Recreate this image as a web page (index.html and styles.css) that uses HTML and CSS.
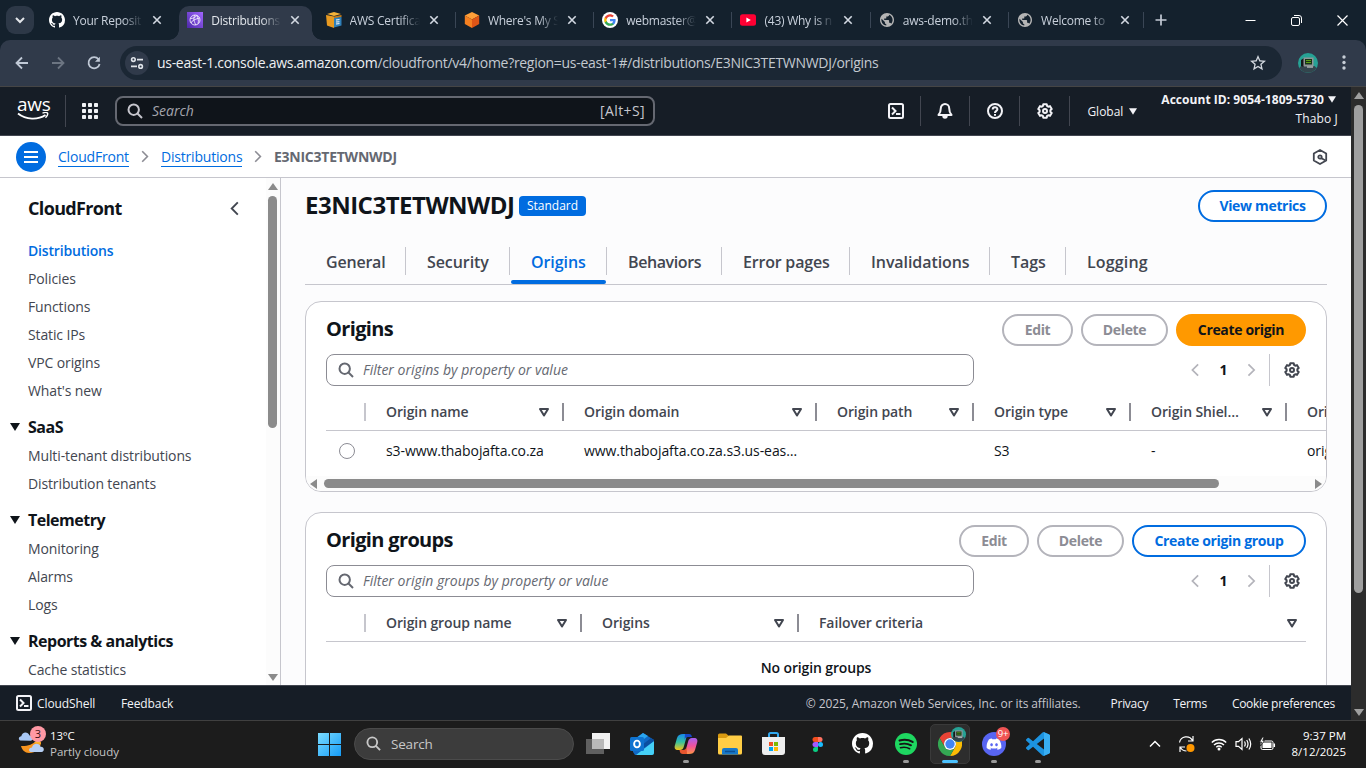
FILE: index.html
```html
<!DOCTYPE html>
<html lang="en">
<head>
<meta charset="utf-8">
<title>Distributions</title>
<link rel="stylesheet" href="styles.css">
</head>
<body>
<svg class="defs" width="0" height="0">
  <symbol id="x" viewBox="0 0 10 10"><path d="M1.3 1.3l7.4 7.4M8.7 1.3L1.3 8.7" stroke="currentColor" stroke-width="1.6" fill="none"/></symbol>
  <symbol id="github" viewBox="0 0 16 16"><path fill="#fff" d="M8 0C3.58 0 0 3.58 0 8c0 3.54 2.29 6.53 5.47 7.59.4.07.55-.17.55-.38 0-.19-.01-.82-.01-1.49-2.01.37-2.53-.49-2.69-.94-.09-.23-.48-.94-.82-1.13-.28-.15-.68-.52-.01-.53.63-.01 1.08.58 1.23.82.72 1.21 1.87.87 2.33.66.07-.52.28-.87.51-1.07-1.78-.2-3.64-.89-3.64-3.95 0-.87.31-1.59.82-2.15-.08-.2-.36-1.02.08-2.12 0 0 .67-.21 2.2.82.64-.18 1.32-.27 2-.27.68 0 1.36.09 2 .27 1.53-1.04 2.2-.82 2.2-.82.44 1.1.16 1.92.08 2.12.51.56.82 1.27.82 2.15 0 3.07-1.87 3.75-3.65 3.95.29.25.54.73.54 1.48 0 1.07-.01 1.93-.01 2.2 0 .21.15.46.55.38A8.013 8.013 0 0016 8c0-4.42-3.58-8-8-8z"/></symbol>
  <symbol id="globe" viewBox="2 2 20 20"><path fill="#b4b4b4" d="M12 2C6.48 2 2 6.48 2 12s4.48 10 10 10 10-4.48 10-10S17.52 2 12 2zm-1 17.93c-3.95-.49-7-3.85-7-7.93 0-.62.08-1.21.21-1.79L9 15v1c0 1.1.9 2 2 2v1.930zm6.9-2.54c-.26-.81-1-1.390-1.900-1.390h-1v-3c0-.55-.45-1-1-1H8v-2h2c.55 0 1-.45 1-1V7h2c1.100 0 2-.9 2-2v-.41c2.930 1.190 5 4.060 5 7.410 0 2.080-.8 3.970-2.100 5.390z"/></symbol>
  <symbol id="search" viewBox="0 0 16 16"><circle cx="6.7" cy="6.7" r="5.2" fill="none" stroke="currentColor" stroke-width="2"/><path d="M10.5 10.500l4.500 4.500" stroke="currentColor" stroke-width="2"/></symbol>
  <symbol id="gear" viewBox="0 0 16 16"><g fill="none" stroke="currentColor" stroke-width="2" stroke-linejoin="round"><path d="M5.890 3.030L6.310 1.210H9.690L10.110 3.030 11.250 3.690 13.030 3.140 14.720 6.070 13.360 7.340V8.660L14.720 9.930 13.030 12.860 11.250 12.310 10.110 12.970 9.690 14.790H6.310L5.890 12.970 4.750 12.310 2.970 12.860 1.280 9.930 2.640 8.660V7.340L1.280 6.070 2.970 3.140 4.750 3.690z"/><circle cx="8" cy="8" r="2"/></g></symbol>
  <symbol id="shell" viewBox="0 0 16 16"><g fill="none" stroke="currentColor" stroke-width="2"><rect x="1" y="1" width="14" height="14" rx="1.500"/><path d="M4 4.500L7.500 8 4 11.500M8 11h4.500"/></g></symbol>
  <symbol id="next" viewBox="0 0 10 16"><path d="M1.500 1.500L8 8l-6.500 6.500" fill="none" stroke="currentColor" stroke-width="2"/></symbol>
  <symbol id="prev" viewBox="0 0 10 16"><path d="M8 1.500L1.500 8 8 14.500" fill="none" stroke="currentColor" stroke-width="2"/></symbol>
  <symbol id="down" viewBox="0 0 10 8"><path d="M0 0h10L5 8z" fill="currentColor"/></symbol>
  <symbol id="sort" viewBox="0 0 10 9"><path d="M1 1h8L5 7.500z" fill="none" stroke="currentColor" stroke-width="2" stroke-linejoin="round"/></symbol>
  <symbol id="avatar" viewBox="0 0 20 20"><circle cx="10" cy="10" r="10" fill="#26a295"/><path d="M1.500 15a10 10 0 0017 0l-2-2H3z" fill="#34454d"/><path d="M3 7l3-2v9l-3-1z" fill="#15191b"/><rect x="5.500" y="4.500" width="10" height="9" fill="#8f9698"/><rect x="7" y="6" width="7" height="5.500" fill="#173318"/><path d="M8 7.500h5M8 9.500h5" stroke="#5c9e18"/><path d="M9 14h6" stroke="#aab0b0" stroke-width="1.500"/></symbol>
</svg>

<header class="tabstrip">
  <button class="tab-search"><svg width="10" height="7" viewBox="0 0 10 7"><path d="M1 1l4 4 4-4" fill="none" stroke="#e3e6ea" stroke-width="2"/></svg></button>
  <div class="tabs">
    <div class="tab"><svg class="fav"><use href="#github"/></svg><span class="ttl">Your Reposit</span><svg class="close"><use href="#x"/></svg></div>
    <div class="tab active"><svg class="fav" viewBox="0 0 16 16"><defs><linearGradient id="pu" x1="0" y1="1" x2="1" y2="0"><stop stop-color="#4c28a8"/><stop offset="1" stop-color="#a166ff"/></linearGradient></defs><rect width="16" height="16" fill="url(#pu)"/><g fill="none" stroke="#fff" stroke-width=".8"><circle cx="8" cy="8" r="5"/><path d="M3.500 6.500c3 0 5-1 6-3M4 11c1-3 5-4 8.500-5M8 3c-2 3-1 7 1 10M10 3.500c1 3 2 5 1 8"/></g></svg><span class="ttl">Distributions</span><svg class="close"><use href="#x"/></svg></div>
    <div class="tab"><svg class="fav" viewBox="0 0 16 16"><path fill="#f5b338" d="M1 2l7-2 7 2-7 2z"/><path fill="#e89b21" d="M0 3l8 1.500V16l-7-2.500z"/><path fill="#c87b15" d="M8 4.500L15.500 3v2L8 7z"/><path fill="#2e80ba" d="M8 6l7.500-1v8.500L8 15.500z"/><path d="M10 8l3.500-.4M10 10l3.500-.2M10 12l3.500-.4" stroke="#fff"/></svg><span class="ttl">AWS Certifica</span><svg class="close"><use href="#x"/></svg></div>
    <div class="tab sep"><svg class="fav" viewBox="0 0 16 16"><path fill="#ff9f38" d="M8 0l7.200 3.500L8 7.500.8 3.500z"/><path fill="#f58020" d="M.8 3.500L8 7.500V16L.8 12z"/><path fill="#df5516" d="M8 7.500l7.200-4V12L8 16z"/></svg><span class="ttl">Where's My S</span><svg class="close"><use href="#x"/></svg></div>
    <div class="tab sep"><svg class="fav" viewBox="0 0 16 16"><circle cx="8" cy="8" r="8" fill="#fff"/><g transform="translate(1.600 1.600) scale(.533)"><path fill="#4285f4" d="M22.560 12.250c0-.78-.07-1.530-.2-2.250H12v4.260h5.920c-.26 1.370-1.040 2.530-2.210 3.310v2.770h3.570c2.080-1.920 3.280-4.740 3.280-8.090z"/><path fill="#34a853" d="M12 23c2.970 0 5.460-.98 7.280-2.660l-3.570-2.770c-.98.66-2.230 1.060-3.710 1.060-2.860 0-5.290-1.930-6.160-4.530H2.180v2.840C3.990 20.530 7.700 23 12 23z"/><path fill="#fbbc05" d="M5.840 14.090c-.22-.66-.35-1.360-.35-2.090s.13-1.430.35-2.090V7.070H2.180C1.430 8.550 1 10.220 1 12s.43 3.450 1.180 4.930l2.850-2.220z"/><path fill="#ea4335" d="M12 5.380c1.620 0 3.060.56 4.210 1.640l3.150-3.150C17.450 2.090 14.970 1 12 1 7.700 1 3.990 3.470 2.180 7.070l3.660 2.840c.87-2.600 3.300-4.530 6.160-4.530z"/></g></svg><span class="ttl">webmaster@</span><svg class="close"><use href="#x"/></svg></div>
    <div class="tab sep"><svg class="fav" viewBox="0 0 16 16"><rect y="2.300" width="16" height="11.400" rx="2.500" fill="#f03"/><path d="M6.400 5.500v5L10.800 8z" fill="#fff"/></svg><span class="ttl">(43) Why is n</span><svg class="close"><use href="#x"/></svg></div>
    <div class="tab sep"><svg class="fav globe"><use href="#globe"/></svg><span class="ttl">aws-demo.th</span><svg class="close"><use href="#x"/></svg></div>
    <div class="tab sep"><svg class="fav globe"><use href="#globe"/></svg><span class="ttl">Welcome to</span><svg class="close"><use href="#x"/></svg></div>
  </div>
  <svg class="plus" width="12" height="12" viewBox="0 0 12 12"><path d="M6 .5v11M.5 6h11" stroke="#c3cad5" stroke-width="1.700"/></svg>
  <div class="window-controls">
    <svg width="11" height="11" viewBox="0 0 11 11"><path d="M.5 5.500h10" stroke="#fff"/></svg>
    <svg width="11" height="11" viewBox="0 0 11 11"><g fill="none" stroke="#fff"><rect x=".5" y="2.500" width="8" height="8" rx="1.500"/><path d="M3 .5h5a2.500 2.500 0 012.500 2.500v5"/></g></svg>
    <svg width="11" height="11" viewBox="0 0 11 11"><path d="M.5.5l10 10M10.500.5l-10 10" stroke="#fff" stroke-width="1.200"/></svg>
  </div>
</header>

<div class="toolbar-wrap"><div class="toolbar">
  <svg class="nav-ic" viewBox="0 0 16 16"><path d="M14 8H3M8 2.500L2.500 8 8 13.500" stroke="#c0c9d6" stroke-width="1.800" fill="none"/></svg>
  <svg class="nav-ic" viewBox="0 0 16 16"><path d="M2 8h11M8 2.500L13.500 8 8 13.500" stroke="#6c7582" stroke-width="1.800" fill="none"/></svg>
  <svg class="nav-ic" viewBox="0 0 16 16"><path d="M12.500 4.200A5.600 5.600 0 1013.600 9" stroke="#c0c9d6" stroke-width="1.800" fill="none"/><path d="M13.900 1.800v5H9z" fill="#c0c9d6"/></svg>
  <div class="omnibox">
    <span class="site"><svg width="14" height="14" viewBox="0 0 14 14"><g stroke="#dfe3e8" stroke-width="1.600" fill="none"><circle cx="3.400" cy="3.600" r="1.800"/><path d="M7 3.600h6M1 10.400h6"/><circle cx="10.600" cy="10.400" r="1.800"/></g></svg></span>
    <span class="url"><b>us-east-1.console.aws.amazon.com</b>/cloudfront/v4/home?region=us-east-1#/distributions/E3NIC3TETWNWDJ/origins</span>
    <svg class="star" width="16" height="16" viewBox="2 2 20 20"><path fill="#d4d9e0" d="M22 9.240l-7.190-.62L12 2 9.190 8.630 2 9.240l5.460 4.730L5.820 21 12 17.270 18.180 21l-1.630-7.030L22 9.240zM12 15.400l-3.760 2.270 1-4.280-3.320-2.880 4.380-.38L12 6.100l1.710 4.040 4.380.38-3.320 2.880 1 4.280L12 15.400z"/></svg>
  </div>
  <svg class="avatar" width="20" height="20"><use href="#avatar"/></svg>
  <svg width="4" height="16" viewBox="0 0 4 16"><g fill="#c6cdd6"><circle cx="2" cy="2" r="1.700"/><circle cx="2" cy="7.500" r="1.700"/><circle cx="2" cy="13" r="1.700"/></g></svg>
</div></div>

<div class="viewport">
 <div class="page">
  <header class="aws-head">
    <div class="aws-logo"><span>aws</span><svg width="32" height="9" viewBox="0 0 32 9"><path d="M1 1.500c8 6.500 20 6.500 27.500 1.500" fill="none" stroke="#fff" stroke-width="1.800"/><path d="M25.500 1.200c2-.8 4.500-.8 5 0s-.5 3-2 4.500" fill="none" stroke="#fff" stroke-width="1.400"/></svg></div>
    <i class="vline"></i>
    <svg class="grid9" width="16" height="16" viewBox="0 0 16 16"><g fill="#f0f2f5"><rect width="4" height="4" rx=".8"/><rect x="6" width="4" height="4" rx=".8"/><rect x="12" width="4" height="4" rx=".8"/><rect y="6" width="4" height="4" rx=".8"/><rect x="6" y="6" width="4" height="4" rx=".8"/><rect x="12" y="6" width="4" height="4" rx=".8"/><rect y="12" width="4" height="4" rx=".8"/><rect x="6" y="12" width="4" height="4" rx=".8"/><rect x="12" y="12" width="4" height="4" rx=".8"/></g></svg>
    <div class="aws-search"><svg width="16" height="16"><use href="#search"/></svg><em>Search</em><span>[Alt+S]</span></div>
    <div class="aws-tools">
      <span class="tool"><svg width="16" height="16"><use href="#shell"/></svg></span>
      <span class="tool"><svg width="16" height="16" viewBox="0 0 16 16"><path d="M8 1a4.200 4.200 0 00-4.200 4.200c0 3.300-1 5.300-2.300 6.800h13c-1.300-1.500-2.300-3.500-2.300-6.800A4.200 4.200 0 008 1z" fill="none" stroke="currentColor" stroke-width="2" stroke-linejoin="round"/><path d="M5.300 13h5.400a2.700 2.700 0 01-5.400 0z" fill="currentColor"/></svg></span>
      <span class="tool"><svg width="16" height="16" viewBox="0 0 16 16"><g fill="none" stroke="currentColor" stroke-width="2"><circle cx="8" cy="8" r="7"/><path d="M5.700 6.500c0-3 4.700-3 4.700-.2C10.400 8 8 7.800 8 10M8 11v1.800"/></g></svg></span>
      <span class="tool"><svg width="16" height="16"><use href="#gear"/></svg></span>
    </div>
    <div class="region">Global<svg width="8" height="7"><use href="#down"/></svg></div>
    <div class="account"><b>Account ID: 9054-1809-5730</b><svg width="8" height="7"><use href="#down"/></svg><span>Thabo J</span></div>
  </header>

  <nav class="crumbs">
    <span class="menu"><svg width="14" height="12" viewBox="0 0 14 12"><path d="M0 1h14M0 6h14M0 11h14" stroke="#fff" stroke-width="2"/></svg></span>
    <a class="c1">CloudFront</a><svg class="chev"><use href="#next"/></svg>
    <a class="c2">Distributions</a><svg class="chev"><use href="#next"/></svg>
    <b>E3NIC3TETWNWDJ</b>
    <svg class="hexclock" width="16" height="16" viewBox="0 0 16 16"><g fill="none" stroke="#424650" stroke-width="1.800"><path d="M8 1l6.200 3.500v7L8 15l-6.200-3.500v-7z" stroke-linejoin="round"/><circle cx="8" cy="8" r="1.700"/><path d="M9 9l4.500 2.500"/></g></svg>
  </nav>

  <div class="body">
    <aside class="side">
      <div class="side-in">
        <h2>CloudFront<svg width="10" height="15"><use href="#prev"/></svg></h2>
        <ul class="first"><li class="on">Distributions</li><li>Policies</li><li>Functions</li><li>Static IPs</li><li>VPC origins</li><li>What's new</li></ul>
        <h3><svg><use href="#down"/></svg>SaaS</h3>
        <ul><li>Multi-tenant distributions</li><li>Distribution tenants</li></ul>
        <h3><svg><use href="#down"/></svg>Telemetry</h3>
        <ul><li>Monitoring</li><li>Alarms</li><li>Logs</li></ul>
        <h3><svg><use href="#down"/></svg>Reports &amp; analytics</h3>
        <ul><li>Cache statistics</li></ul>
      </div>
      <div class="vbar"><i class="up"></i><i class="thumb"></i><i class="dn"></i></div>
    </aside>

    <main>
      <div class="title"><h1>E3NIC3TETWNWDJ</h1><span class="badge">Standard</span><button class="btn blue vm">View metrics</button></div>
      <div class="navtabs"><span class="t1">General</span><span class="t2">Security</span><span class="t3 sel">Origins</span><span class="t4">Behaviors</span><span class="t5">Error pages</span><span class="t6">Invalidations</span><span class="t7">Tags</span><span class="t8">Logging</span></div>

      <section class="card one">
        <div class="card-head"><h2>Origins</h2><button class="btn edit">Edit</button><button class="btn del">Delete</button><button class="btn orange">Create origin</button></div>
        <div class="filter-row"><div class="filter"><svg width="16" height="16"><use href="#search"/></svg><em>Filter origins by property or value</em></div><div class="pager"><svg><use href="#prev"/></svg><b>1</b><svg><use href="#next"/></svg><i></i><svg class="cog"><use href="#gear"/></svg></div></div>
        <div class="table a">
          <div class="thead"><span></span><span>Origin name<svg><use href="#sort"/></svg></span><span>Origin domain<svg><use href="#sort"/></svg></span><span>Origin path<svg><use href="#sort"/></svg></span><span>Origin type<svg><use href="#sort"/></svg></span><span>Origin Shiel…<svg><use href="#sort"/></svg></span><span>Ori</span></div>
          <div class="trow"><span><i class="radio"></i></span><span>s3-www.thabojafta.co.za</span><span>www.thabojafta.co.za.s3.us-eas…</span><span></span><span>S3</span><span>-</span><span>orig</span></div>
        </div>
        <div class="hbar"><i class="lf"></i><i class="thumb"></i><i class="rt"></i></div>
      </section>

      <section class="card two">
        <div class="card-head"><h2>Origin groups</h2><button class="btn edit">Edit</button><button class="btn del">Delete</button><button class="btn blue cog2">Create origin group</button></div>
        <div class="filter-row"><div class="filter"><svg width="16" height="16"><use href="#search"/></svg><em>Filter origin groups by property or value</em></div><div class="pager"><svg><use href="#prev"/></svg><b>1</b><svg><use href="#next"/></svg><i></i><svg class="cog"><use href="#gear"/></svg></div></div>
        <div class="table b">
          <div class="thead"><span></span><span>Origin group name<svg><use href="#sort"/></svg></span><span>Origins<svg><use href="#sort"/></svg></span><span>Failover criteria<svg><use href="#sort"/></svg></span></div>
        </div>
        <p class="empty">No origin groups</p>
      </section>
    </main>
  </div>

  <footer class="foot"><svg width="16" height="16"><use href="#shell"/></svg><b class="f1">CloudShell</b><b class="f2">Feedback</b><span class="copy">© 2025, Amazon Web Services, Inc. or its affiliates.</span><b class="f3">Privacy</b><b class="f4">Terms</b><b class="f5">Cookie preferences</b></footer>
 </div>
 <div class="vbar dark"><i class="up"></i><i class="thumb"></i><i class="dn"></i></div>
</div>

<div class="taskbar">
  <div class="weather">
    <svg width="28" height="30" viewBox="0 0 28 30"><path d="M3 20c5 .5 12-1 16-6l4 2c0 6-5 11-12 11-4 0-7-3-8-7z" fill="#f7941e"/><path d="M16 17l5-4 2 5z" fill="#fbb62f"/><path d="M2.500 14.500c-2.500-.5-2-4 .8-4.200C4 5.500 10 5 11.500 9.500c4-.5 4.500 5 1 5.200z" fill="#a9c8f5"/><path d="M13 26c-3-.5-2.500-4.500 1-4.500.5-5 8-5 8.500-.8 4-.4 4.500 5 1 5.300z" fill="#b7cff3"/><circle cx="20" cy="8" r="8" fill="#ff99a4"/><text x="20" y="12" class="wnum">3</text></svg>
    <div><span>13°C</span><small>Partly cloudy</small></div>
  </div>
  <div class="cell start"><svg width="24" height="24" viewBox="0 0 24 24"><defs><linearGradient id="win" x1="0" y1="0" x2="1" y2="1" gradientUnits="objectBoundingBox"><stop stop-color="#7bdcff"/><stop offset="1" stop-color="#159cf7"/></linearGradient></defs><path fill="url(#win)" d="M1 1h11v11H1zM13 1h11v11H13zM1 13h11v11H1zM13 13h11v11H13z"/></svg></div>
  <div class="tsearch"><svg width="15" height="15"><use href="#search"/></svg>Search</div>
  <div class="apps">
    <div class="cell"><svg width="24" height="24" viewBox="0 0 24 24"><rect x="6" y="1" width="18" height="16" fill="#f2f2f2"/><path d="M0 7h18v15H0z" fill="#5f5f5f"/><path d="M6 7h12v10H6z" fill="#b9b9b9"/></svg></div>
    <div class="cell"><svg width="24" height="24" viewBox="0 0 24 24"><path d="M3 8l10-7 11 7v13l-2 2H5l-2-3z" fill="#1068c4"/><path d="M13 1l5 3-8 6-5-3z" fill="#2aa5ef"/><path d="M24 9v12a2 2 0 01-2 2H6z" fill="#45d0f7"/><path d="M14 16l10-7v-1l-3-2-9 7z" fill="#0a4fa0"/><rect y="5" width="14" height="14" rx="1.500" fill="#0f73d0"/><ellipse cx="7" cy="12" rx="2.900" ry="3.400" fill="none" stroke="#fff" stroke-width="1.900"/></svg></div>
    <div class="cell run"><svg width="24" height="24" viewBox="0 0 24 24"><defs><linearGradient id="cp1" x1="0" y1="0" x2="0" y2="1"><stop stop-color="#1688ec"/><stop offset=".5" stop-color="#35c1a0"/><stop offset="1" stop-color="#f5c518"/></linearGradient><linearGradient id="cp2" x1="0" y1="0" x2="0" y2="1"><stop stop-color="#a660f0"/><stop offset=".5" stop-color="#f0529c"/><stop offset="1" stop-color="#ff9445"/></linearGradient></defs><path d="M9 2h7c-2 0-3 1-3.500 3l-2.500 9c-.8 3-2 4-4 4H4c-3 0-4-2-3-5l2-7c1-3 3-4 6-4z" fill="url(#cp1)"/><path d="M11 2h4c2 0 2.500 1 3 3h-4c-2 0-3 1-3.500 3z" fill="#1647c8"/><path d="M15 22H8c2 0 3-1 3.500-3L14 10c.8-3 2-4 4-4h2c3 0 4 2 3 5l-2 7c-1 3-3 4-6 4z" fill="url(#cp2)"/><path d="M13 22H9c-2 0-3-1-3.500-4H9c2 0 3-1 3.500-3z" fill="#e8562e"/></svg></div>
    <div class="cell"><svg width="24" height="24" viewBox="0 0 24 24"><path d="M0 3a1.500 1.500 0 011.500-1.500H8L11 4v5H0z" fill="#d99a10"/><path d="M0 6h8l3-2.500h12A1 1 0 0124 4.500V21a1.500 1.500 0 01-1.500 1.500h-21A1.500 1.500 0 010 21z" fill="#ffcd45"/><path d="M4 22.500V18a2 2 0 012-2h12a2 2 0 012 2v4.500z" fill="#1778c8"/><path d="M7 19.500h10" stroke="#0c4f92" stroke-width="1.500"/></svg></div>
    <div class="cell"><svg width="24" height="24" viewBox="0 0 24 24"><path d="M7 7V2.500A1.500 1.500 0 018.500 1h6A1.500 1.500 0 0116 2.500V7" fill="none" stroke="#31a8ef" stroke-width="2"/><path d="M0 5h23v15a3 3 0 01-3 3H3a3 3 0 01-3-3z" fill="#eee"/><path fill="#f25022" d="M7 10h4v4H7z"/><path fill="#7fba00" d="M12 10h4v4h-4z"/><path fill="#00a4ef" d="M7 15h4v4H7z"/><path fill="#ffb900" d="M12 15h4v4h-4z"/></svg></div>
    <div class="cell"><svg width="24" height="24" viewBox="0 0 24 24"><path fill="#f24e1e" d="M12 5v5H9a2.500 2.500 0 010-5z"/><path fill="#ff7262" d="M12 5h2a2.500 2.500 0 010 5h-2z"/><path fill="#a259ff" d="M12 10v5H9a2.500 2.500 0 010-5z"/><circle cx="14.500" cy="12.500" r="2.500" fill="#1abcfe"/><path fill="#0acf83" d="M12 15v2.500A2.500 2.500 0 119.500 15z"/></svg></div>
    <div class="cell"><svg width="21" height="21"><use href="#github"/></svg></div>
    <div class="cell run"><svg width="22" height="22" viewBox="0 0 24 24"><circle cx="12" cy="12" r="12" fill="#1ed760"/><g fill="none" stroke="#151515" stroke-linecap="round"><path d="M5 8.200c5-1.500 10-.9 14.200 1.500" stroke-width="2.400"/><path d="M5.500 12.200c4.400-1.200 8.500-.8 12 1.300" stroke-width="2"/><path d="M6 16c3.600-.9 7-.6 10 1.200" stroke-width="1.700"/></g></svg></div>
    <div class="cell chrome"><svg width="24" height="24" viewBox="0 0 24 24"><path fill="#ea4335" d="M12 0a12 12 0 0110.400 6H12a6 6 0 00-5.200 9L1.600 6A12 12 0 0112 0z"/><path fill="#fbbc04" d="M22.400 6A12 12 0 0112 24l5.200-9A6 6 0 0012 6z"/><path fill="#34a853" d="M1.600 6A12 12 0 0012 24l5.200-9a6 6 0 01-10.400 0z"/><circle cx="12" cy="12" r="6" fill="#fff"/><circle cx="12" cy="12" r="4.700" fill="#4285f4"/></svg><svg class="over" width="15" height="15"><use href="#avatar"/></svg></div>
    <div class="cell run"><svg width="24" height="24" viewBox="0 0 24 24"><circle cx="12" cy="12" r="12" fill="#5865f2"/><path fill="#fff" transform="translate(4.600 4.700) scale(.62)" d="M20.317 4.370a19.800 19.800 0 00-4.885-1.515.074.074 0 00-.079.037c-.21.375-.444.865-.608 1.250-1.845-.276-3.680-.276-5.487 0-.164-.393-.406-.874-.618-1.250a.077.077 0 00-.079-.037 19.736 19.736 0 00-4.885 1.515C.533 9.046-.319 13.580.099 18.058c2.083 1.560 4.072 2.475 6.024 3.085.546-.658.957-1.322 1.310-2.021-.694-.354-1.316-.655-1.914-1l.37-.420c3.929 1.795 8.180 1.795 12.140 0l.373.420c-.598.350-1.220.645-1.873.892.320.805.731 1.470 1.185 2.100 1.960-.578 3.948-1.493 6.001-3 .5-5.177-.838-9.674-3.548-13.660zM8.020 15.330c-1.182 0-2.157-1.085-2.157-2.419 0-1.333.956-2.419 2.157-2.419 1.210 0 2.176 1.096 2.157 2.420 0 1.333-.956 2.418-2.157 2.418zm7.975 0c-1.183 0-2.157-1.085-2.157-2.419 0-1.333.955-2.419 2.157-2.419 1.210 0 2.176 1.096 2.157 2.420 0 1.333-.946 2.418-2.157 2.418z"/></svg><span class="count">9+</span></div>
    <div class="cell run"><svg width="24" height="24" viewBox="0 0 24 24"><path fill="#1c93e0" d="M23.150 2.587L18.210.21a1.494 1.494 0 0 0-1.705.29l-9.460 8.630-4.120-3.128a.999.999 0 0 0-1.276.057L.327 7.261A1 1 0 0 0 .326 8.740L3.899 12 .326 15.260a1 1 0 0 0 .001 1.479L1.650 17.940a.999.999 0 0 0 1.276.057l4.120-3.128 9.460 8.630a1.492 1.492 0 0 0 1.704.29l4.942-2.377A1.500 1.500 0 0 0 24 20.060V3.939a1.500 1.500 0 0 0-.85-1.352zm-5.146 14.861L10.826 12l7.178-5.448v10.896z"/><path d="M18 .3l5.200 2.300a1.500 1.500 0 01.8 1.400v16a1.500 1.500 0 01-.8 1.400L18 23.700z" fill="#38aef3"/></svg></div>
  </div>
  <div class="tray">
    <svg width="12" height="8" viewBox="0 0 12 8"><path d="M1 6.500l5-5 5 5" fill="none" stroke="#fff" stroke-width="1.500"/></svg>
    <svg class="sync" width="18" height="18" viewBox="0 0 18 18"><g fill="none" stroke="#fff" stroke-width="1.200"><path d="M1.500 7.500a7 7 0 0113-2M15 1v5h-5M2 17v-5h5M2.500 12.500a7 7 0 006 3.500"/></g><circle cx="12.500" cy="13" r="4" fill="#ff9800"/></svg>
    <svg class="wifi" width="16" height="14" viewBox="0 0 16 14"><g fill="none" stroke="#fff" stroke-width="1.400"><path d="M.8 5.500a10.300 10.300 0 0114.400 0M3 8a7.200 7.200 0 0110 0M5.300 10.300a4 4 0 015.400 0"/></g><circle cx="8" cy="12" r="1.500" fill="#fff"/></svg>
    <svg class="vol" width="17" height="14" viewBox="0 0 17 14"><g fill="none" stroke="#fff" stroke-width="1.200"><path d="M1 4.700h2.500L7 1.500v11L3.500 9.300H1zM9.500 4.500q1.500 2.500 0 5M11.700 3q2.600 4 0 8M13.900 1.500q3.600 5.500 0 11"/></g></svg>
    <svg class="bat" width="17" height="14" viewBox="0 0 17 14"><rect x="2" y="4" width="12" height="8.500" rx="1.500" fill="none" stroke="#fff"/><rect x="3.500" y="5.500" width="9" height="5.500" fill="#fff"/><path d="M15.300 6.500v3.500" stroke="#fff" stroke-width="1.500"/><path d="M3.500 0L.5 5h2L1.500 9 5.500 3.500H3.700L5 0z" fill="#fff" stroke="#1c1c1c" stroke-width=".8"/></svg>
    <div class="clock"><span>9:37 PM</span><span>8/12/2025</span></div>
  </div>
</div>
</body>
</html>
```
FILE: styles.css
```css
* { box-sizing: border-box; margin: 0; padding: 0; }
body { width: 1366px; height: 768px; overflow: hidden; display: flex; flex-direction: column; font-family: "Open Sans", "Noto Sans", sans-serif; font-size: 14px; color: #0f141a; background: #14212d; }
svg { display: block; flex: none; }
.defs { position: absolute; }
button { font: inherit; border: 0; background: none; }
ul { list-style: none; }
em { font-style: italic; }

/* browser tab strip */
.tabstrip { height: 40px; flex: none; display: flex; align-items: center; background: #14212d; }
.tab-search { width: 28px; height: 28px; margin: 0 7px 0 6px; border-radius: 9px; background: #2d3847; display: grid; place-items: center; }
.tabs { display: flex; height: 34px; margin-top: 6px; }
.tab { width: 138.3px; display: flex; align-items: center; padding: 0 0 6px 8px; font-size: 12px; letter-spacing: -.25px; color: #c8d0db; position: relative; }
.fav { width: 16px; height: 16px; margin-right: 8px; }
.fav.globe { width: 14px; height: 14px; margin: 0 9px 0 1px; }
.ttl { width: 70px; white-space: nowrap; -webkit-mask-image: linear-gradient(90deg, #000 72%, transparent); mask-image: linear-gradient(90deg, #000 72%, transparent); }
.close { width: 10px; height: 10px; margin-left: 9px; color: #d3d9e2; }
.tab.active { background: #303a4a; border-radius: 10px 10px 0 0; width: 133px; margin-right: 5.300px; color: #e3e7ec; }
.tab.active::before, .tab.active::after { content: ""; position: absolute; bottom: 0; width: 10px; height: 10px; }
.tab.active::before { left: -10px; background: radial-gradient(circle at 0 0, transparent 9.5px, #303a4a 10px); }
.tab.active::after { right: -10px; background: radial-gradient(circle at 100% 0, transparent 9.5px, #303a4a 10px); }
.tab.sep::before { content: ""; position: absolute; left: -1px; top: 6px; width: 1px; height: 16px; background: #3a4655; }
.tab.sep:last-child::after { content: ""; position: absolute; right: 3px; top: 6px; width: 1px; height: 16px; background: #3a4655; }
.plus { margin-left: 8px; }
.window-controls { margin-left: auto; display: flex; gap: 35px; padding-right: 18px; }

/* browser toolbar */
.toolbar-wrap { flex: none; height: 47px; border-bottom: 1px solid #454545; background: #14212d; }
.toolbar { height: 46px; background: #303a4a; border-radius: 10px 10px 0 0; display: flex; align-items: center; padding-left: 14px; }
.nav-ic { width: 16px; height: 16px; margin-right: 20px; }
.omnibox { width: 1162px; height: 34px; margin-left: -2px; border-radius: 17px; background: #1b2734; display: flex; align-items: center; padding: 0 16px 0 5px; }
.site { width: 24px; height: 24px; border-radius: 50%; background: #303a4a; display: grid; place-items: center; }
.url { margin-left: 8px; margin-top: -2px; font-size: 14px; color: #c3c9d0; white-space: nowrap; letter-spacing: -.3px; }
.url b { font-weight: 400; color: #eef0f2; }
.star { margin-left: auto; }
.avatar { margin: 0 24px 0 16px; }

/* viewport */
.viewport { flex: none; height: 633px; display: flex; }
.page { width: 1351px; display: flex; flex-direction: column; background: #fff; overflow: hidden; }
.vbar { width: 14px; background: #fcfcfc; display: flex; flex-direction: column; align-items: center; flex: none; }
.vbar i { display: block; flex: none; }
.vbar .up, .vbar .dn { border: 5px solid transparent; border-top: 0; border-bottom: 7px solid #8b8b8b; }
.vbar .dn { border-bottom: 0; border-top: 7px solid #8b8b8b; margin-top: auto; margin-bottom: 4px; }
.vbar .up { margin-top: 5px; }
.vbar .thumb { width: 9px; height: 232px; margin-top: 6px; border-radius: 5px; background: #8b8b8b; }
.side .vbar { padding-right: 1px; }
.vbar.dark { width: 15px; background: #2c2c2c; }
.vbar.dark .thumb { background: #9f9f9f; height: 488px; }
.vbar.dark .up { border-bottom-color: #9f9f9f; }
.vbar.dark .dn { border-top-color: #9f9f9f; }

.aws-head { height: 49px; flex: none; background: #161d26; border-bottom: 1px solid #424650; display: flex; align-items: center; padding-left: 17px; color: #f3f3f7; }
.aws-logo { width: 32px; height: 26px; color: #fff; }
.aws-logo span { display: block; font-size: 19px; line-height: 18px; margin: -3px 0 -1px; letter-spacing: -.3px; text-align: center; font-weight: 500; }
.vline { width: 1px; height: 32px; margin-left: 16px; background: #424650; }
.grid9 { margin-left: 16px; }
.aws-search { width: 540px; height: 30px; margin-left: 17px; border: 2px solid #656871; border-radius: 8px; background: #0f141a; display: flex; align-items: center; padding: 0 8px 0 10px; color: #c6c6cd; }
.aws-search em { margin: -2px 0 0 9px; color: #a4a4ad; }
.aws-search span { margin: -2px 0 0 auto; letter-spacing: .4px; }
.aws-tools { display: flex; margin-left: 216px; }
.tool { width: 50px; height: 30px; border-right: 1px solid #424650; display: grid; place-items: center; }
.tool:first-child { padding-left: 1px; }
.tool:nth-child(-n+2) { width: 49.700px; }
.region { margin-left: 17px; font-size: 12px; font-weight: 500; display: flex; align-items: center; gap: 6px; }
.account { margin-left: auto; padding-right: 13px; display: grid; grid-template-columns: auto 10px; column-gap: 4px; align-items: center; justify-items: end; font-size: 12px; line-height: 19px; padding-bottom: 5px; }
.account b { font-weight: 700; letter-spacing: .04px; }
.account svg { justify-self: start; }
.account span { grid-column: 1 / 3; letter-spacing: .15px; }

.crumbs { height: 42px; flex: none; border-bottom: 1px solid #c6c6cd; display: flex; align-items: center; padding: 0 23px 0 16px; }
.menu { width: 30px; height: 30px; border-radius: 50%; background: #006ce0; display: grid; place-items: center; margin-right: 12px; }
.crumbs a { color: #006ce0; border-bottom: 1px solid #006ce0; line-height: 18px; white-space: nowrap; letter-spacing: -.2px; margin-top: 1px; }
.c1 { width: 71px; } .c2 { width: 81px; }
.crumbs b { color: #656871; font-weight: 700; font-size: 14px; letter-spacing: -.25px; }
.chev { width: 8px; height: 13px; margin: 0 12px; color: #8c8c94; }
.hexclock { margin-left: auto; }

.body { height: 507px; flex: none; display: flex; }
.side { width: 281px; flex: none; border-right: 1px solid #c6c6cd; display: flex; overflow: hidden; }
.side-in { width: 266px; padding: 16px 26px 0 28px; color: #424650; }
.side h2 { font-size: 18px; line-height: 28px; font-weight: 700; color: #0f141a; display: flex; justify-content: space-between; align-items: center; letter-spacing: -.65px; }
.side h2 svg { color: #424650; }
.side ul { letter-spacing: -.12px; }
.side .first { margin-top: 15px; }
.side li { height: 28px; line-height: 28px; white-space: nowrap; }
.side li.on { color: #006ce0; font-weight: 600; letter-spacing: -.18px; }
.side h3 { margin-left: -18px; font-size: 16px; font-weight: 700; line-height: 22px; height: 22px; margin-top: 11px; margin-bottom: 4px; color: #0f141a; display: flex; align-items: center; gap: 8px; letter-spacing: -.5px; }
.side h3 svg { width: 10px; height: 8px; }

main { flex: 1; background: #fcfcfd; padding: 12px 24px 0 24px; overflow: hidden; }
.title { height: 32px; display: flex; align-items: center; }
h1 { font-size: 24px; font-weight: 700; width: 209px; margin-right: 5px; margin-top: -3px; letter-spacing: -.5px; }
.badge { height: 20px; width: 67px; text-align: center; border-radius: 4px; background: #006ce0; color: #fff; font-size: 12px; line-height: 19px; }
.btn { height: 32px; border: 2px solid #b4b4bb; border-radius: 16px; color: #8c8c94; font-weight: 700; font-size: 14px; line-height: 28px; white-space: nowrap; background: #fff; letter-spacing: -.33px; }
.btn.blue { color: #006ce0; border-color: #006ce0; }
.btn.orange { color: #0f141a; background: #f90; border-color: #f90; width: 130px; }
.vm { width: 129px; margin-left: auto; }
.edit { width: 71px; } .del { width: 87px; } .cog2 { width: 174px; }
.two .edit { width: 70px; }
.navtabs { margin-top: 17px; height: 46px; border-bottom: 1px solid #c6c6cd; display: flex; font-size: 16px; font-weight: 600; color: #424650; }
.navtabs span { padding: 0 0 0 21px; line-height: 46px; position: relative; white-space: nowrap; letter-spacing: -.08px; }
.navtabs span::after { content: ""; position: absolute; right: 0; top: 8px; width: 1px; height: 28px; background: #c6c6cd; }
.navtabs .t8::after { display: none; }
.t1 { width: 101px; } .t2 { width: 104px; } .t3 { width: 97px; } .t4 { width: 115px; } .t5 { width: 128px; } .t6 { width: 140px; } .t7 { width: 76px; }
.navtabs .t1, .navtabs .t5 { letter-spacing: -.2px; }
.navtabs .t4 { letter-spacing: -.4px; }
.navtabs .t8 { letter-spacing: .15px; }
.navtabs .sel { color: #006ce0; }
.sel::before { content: ""; position: absolute; left: 1px; width: 95px; bottom: 0; height: 4px; border-radius: 2px; background: #006ce0; }

.card { border: 1px solid #c6c6cd; border-radius: 16px; background: #fff; overflow: hidden; }
.one { margin-top: 16px; height: 191px; }
.two { margin-top: 20px; height: 240px; }
.card-head { height: 52px; padding: 12px 20px 8px; display: flex; align-items: center; gap: 8px; }
.card-head h2 { font-size: 20px; font-weight: 700; margin-right: auto; line-height: 26px; margin-top: -2px; letter-spacing: -.65px; }
.filter-row { display: flex; padding: 0 13px 0 20px; height: 32px; }
.filter { width: 648px; border: 1px solid #8c8c94; border-radius: 8px; display: flex; align-items: center; padding-left: 11px; color: #656871; }
.filter em { margin: -2px 0 0 9px; }
.pager { margin-left: auto; display: flex; align-items: center; color: #b4b4bb; }
.pager svg { width: 9px; height: 14px; }
.pager b { color: #0f141a; width: 47px; margin-top: -2px; text-align: center; font-weight: 700; }
.pager i { width: 1px; height: 32px; margin: 0 14px 0 13px; background: #c6c6cd; }
.pager .cog { width: 16px; height: 16px; color: #424650; margin-right: 13px; }
.table { margin-left: 20px; }
.thead, .trow { display: grid; white-space: nowrap; }
.a .thead, .a .trow { grid-template-columns: 40px 198px 253px 157px 157px 156px 120px; }
.b .thead { grid-template-columns: 40px 216px 217px 507px; margin-right: 20px; }
.thead { height: 45px; border-bottom: 1px solid #c6c6cd; align-items: center; padding-top: 8px; font-weight: 600; letter-spacing: -.1px; color: #424650; }
.thead span { height: 18px; line-height: 18px; border-right: 2px solid #8c8c94; padding: 0 13px 0 20px; display: flex; justify-content: space-between; align-items: center; }
.thead span:first-child { border-color: #c6c6cd; }
.thead span:last-child { border: 0; padding-right: 9px; }
.thead svg { width: 10px; height: 9px; }
.trow { height: 45px; letter-spacing: -.07px; }
.trow span { padding-left: 20px; line-height: 40px; }
.trow span:first-child { padding: 12px 0 0 13px; }
.radio { display: block; width: 16px; height: 16px; border: 1px solid #8c8c94; border-radius: 50%; }
.hbar { height: 15px; background: #fcfcfc; display: flex; align-items: center; padding: 0 4px; }
.hbar i { display: block; }
.lf, .rt { border: 5px solid transparent; border-left: 0; border-right: 7px solid #8b8b8b; }
.rt { border-right: 0; border-left: 7px solid #8b8b8b; margin-left: auto; }
.hbar .thumb { width: 895px; height: 9px; border-radius: 5px; background: #8b8b8b; margin-left: 7px; }
.empty { text-align: center; font-weight: 600; margin-top: 16px; line-height: 20px; letter-spacing: -.13px; }

.foot { height: 35px; flex: none; background: #161d26; border-top: 1px solid #424650; color: #f3f3f7; font-size: 12px; display: flex; align-items: center; padding: 0 16px; white-space: nowrap; }
.foot b { font-weight: 500; letter-spacing: -.1px; }
.foot .f1 { margin-left: 5px; width: 84px; }
.foot .f3, .foot .f4, .foot .f5 { letter-spacing: -.28px; }
.copy { margin-left: auto; color: #c6c6cd; margin-right: 30px; letter-spacing: -.1px; }
.foot .f3, .foot .f4 { margin-right: 25px; }

/* taskbar */
.taskbar { height: 48px; flex: none; background: #1c1c1c; border-top: 1px solid #404040; padding-bottom: 2px; display: flex; align-items: center; color: #fff; font-size: 12px; }
.weather { width: 307px; padding-left: 18px; display: flex; gap: 4px; line-height: 16px; }
.weather svg { margin-top: -2px; margin-bottom: -4px; }
.wnum { font-size: 11px; text-anchor: middle; fill: #3a1014; }
.weather span, .weather small { display: block; font-size: 11.500px; }
.weather span { letter-spacing: -.2px; }
.weather small { color: #c4c4c4; }
.cell { width: 44px; height: 45px; display: grid; place-items: center; position: relative; }
.tsearch { width: 220px; height: 32px; margin: 0 2px 0 3px; border-radius: 16px; background: #3c3c3c; border: 1px solid #4b4b4b; display: flex; align-items: center; gap: 10px; padding-left: 11px; font-size: 13.500px; letter-spacing: -.2px; color: #c8c8c8; }
.apps { display: flex; }
.run::after, .chrome::after { content: ""; position: absolute; left: 19px; bottom: 3px; width: 6px; height: 3px; border-radius: 2px; background: #9a9a9a; }
.chrome::after { left: 14px; width: 16px; background: #4cc2ff; }
.chrome::before { content: ""; position: absolute; inset: 3px 2px 2px 2px; border-radius: 5px; background: #2d2d2d; border: 1px solid #3a3a3a; }
.chrome svg { position: relative; }
.chrome .over { position: absolute; left: 23px; top: 6px; }
.count { position: absolute; left: 24px; top: 6px; width: 14px; height: 14px; border-radius: 7px; background: #f05454; font-size: 9.500px; line-height: 13px; text-align: center; letter-spacing: -.3px; }
.tray { margin-left: auto; display: flex; align-items: center; padding-right: 20px; }
.sync { margin-left: 17px; } .wifi { margin-left: 15px; } .vol { margin-left: 8px; } .bat { margin-left: 7px; }
.clock { width: 70px; text-align: right; line-height: 16px; font-size: 11.500px; }
.clock span { display: block; }
```
